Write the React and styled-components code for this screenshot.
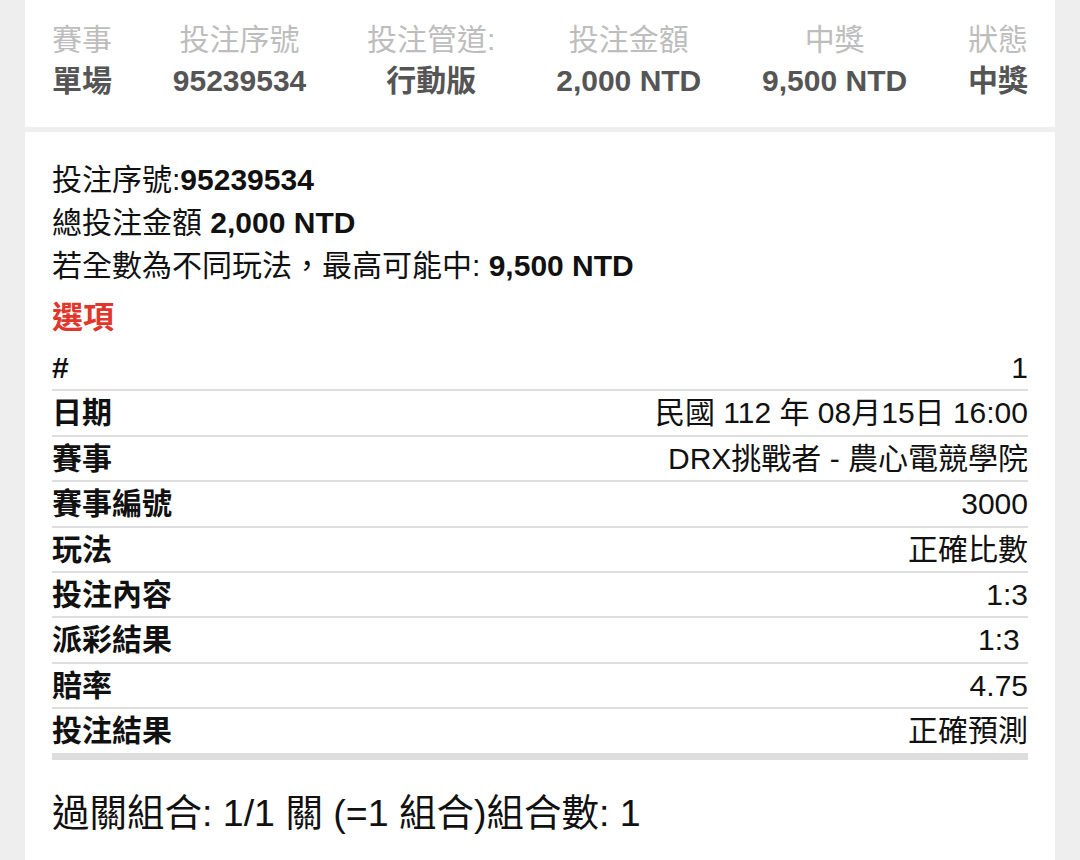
import React from 'react';
import styled, { createGlobalStyle } from 'styled-components';

const GlobalStyle = createGlobalStyle`
  html, body {
    margin: 0;
    padding: 0;
    background: #eeeeee;
  }
  body {
    font-family: "Liberation Sans", "Noto Sans CJK TC", sans-serif;
    color: #111;
  }
`;

const Page = styled.div`
  display: flex;
  flex-direction: column;
  gap: 5px;
  min-height: 860px;
  padding: 0 25px;
  box-sizing: border-box;
  background: #eeeeee;
`;

const SummaryCard = styled.div`
  background: #fff;
  display: flex;
  justify-content: space-between;
  padding: 19px 27px 26px 27px;
`;

const SummaryCol = styled.div`
  display: flex;
  flex-direction: column;
  align-items: center;
  font-size: 30px;
  line-height: 41px;
`;

const SummaryLabel = styled.div`
  color: #bdbdbd;
`;

const SummaryValue = styled.div`
  color: #555;
  font-weight: bold;
`;

const DetailCard = styled.div`
  flex: 1;
  background: #fff;
  padding: 26px 27px 0 27px;
`;

const InfoLine = styled.div`
  font-size: 30px;
  line-height: 43px;
  color: #111;
`;

const Strong = styled.b`
  font-weight: bold;
`;

const SectionTitle = styled.div`
  color: #e0362c;
  font-weight: bold;
  font-size: 31px;
  line-height: 43px;
  margin: 9px 0 7px;
`;

const Table = styled.div`
  display: flex;
  flex-direction: column;
  border-bottom: 7px solid #dddddd;
`;

const Row = styled.div`
  display: flex;
  justify-content: space-between;
  align-items: center;
  font-size: 30px;
  line-height: 35.4px;
  padding: 4px 0;
  border-bottom: ${(p) => (p.$last ? 'none' : '2px solid #dedede')};
`;

const RowLabel = styled.span`
  font-weight: bold;
  color: #111;
`;

const RowValue = styled.span`
  color: #111;
  white-space: pre;
`;

const Combo = styled.div`
  margin-top: 31px;
  font-size: 37.5px;
  line-height: 44px;
  color: #111;
`;

const summary = [
  ['賽事', '單場'],
  ['投注序號', '95239534'],
  ['投注管道:', '行動版'],
  ['投注金額', '2,000 NTD'],
  ['中獎', '9,500 NTD'],
  ['狀態', '中獎'],
];

const rows = [
  ['#', '1'],
  ['日期', '民國 112 年 08月15日 16:00'],
  ['賽事', 'DRX挑戰者 - 農心電競學院'],
  ['賽事編號', '3000'],
  ['玩法', '正確比數'],
  ['投注內容', '1:3'],
  ['派彩結果', '1:3 '],
  ['賠率', '4.75'],
  ['投注結果', '正確預測'],
];

export default function App() {
  return (
    <>
      <GlobalStyle />
      <Page>
        <SummaryCard>
          {summary.map(([label, value]) => (
            <SummaryCol key={label}>
              <SummaryLabel>{label}</SummaryLabel>
              <SummaryValue>{value}</SummaryValue>
            </SummaryCol>
          ))}
        </SummaryCard>

        <DetailCard>
          <InfoLine>
            投注序號:<Strong>95239534</Strong>
          </InfoLine>
          <InfoLine>
            總投注金額 <Strong>2,000 NTD</Strong>
          </InfoLine>
          <InfoLine>
            若全數為不同玩法，最高可能中: <Strong>9,500 NTD</Strong>
          </InfoLine>
          <SectionTitle>選項</SectionTitle>
          <Table>
            {rows.map(([label, value], i) => (
              <Row key={label + i} $last={i === rows.length - 1}>
                <RowLabel>{label}</RowLabel>
                <RowValue>{value}</RowValue>
              </Row>
            ))}
          </Table>
          <Combo>過關組合: 1/1 關 (=1 組合)組合數: 1</Combo>
        </DetailCard>
      </Page>
    </>
  );
}
